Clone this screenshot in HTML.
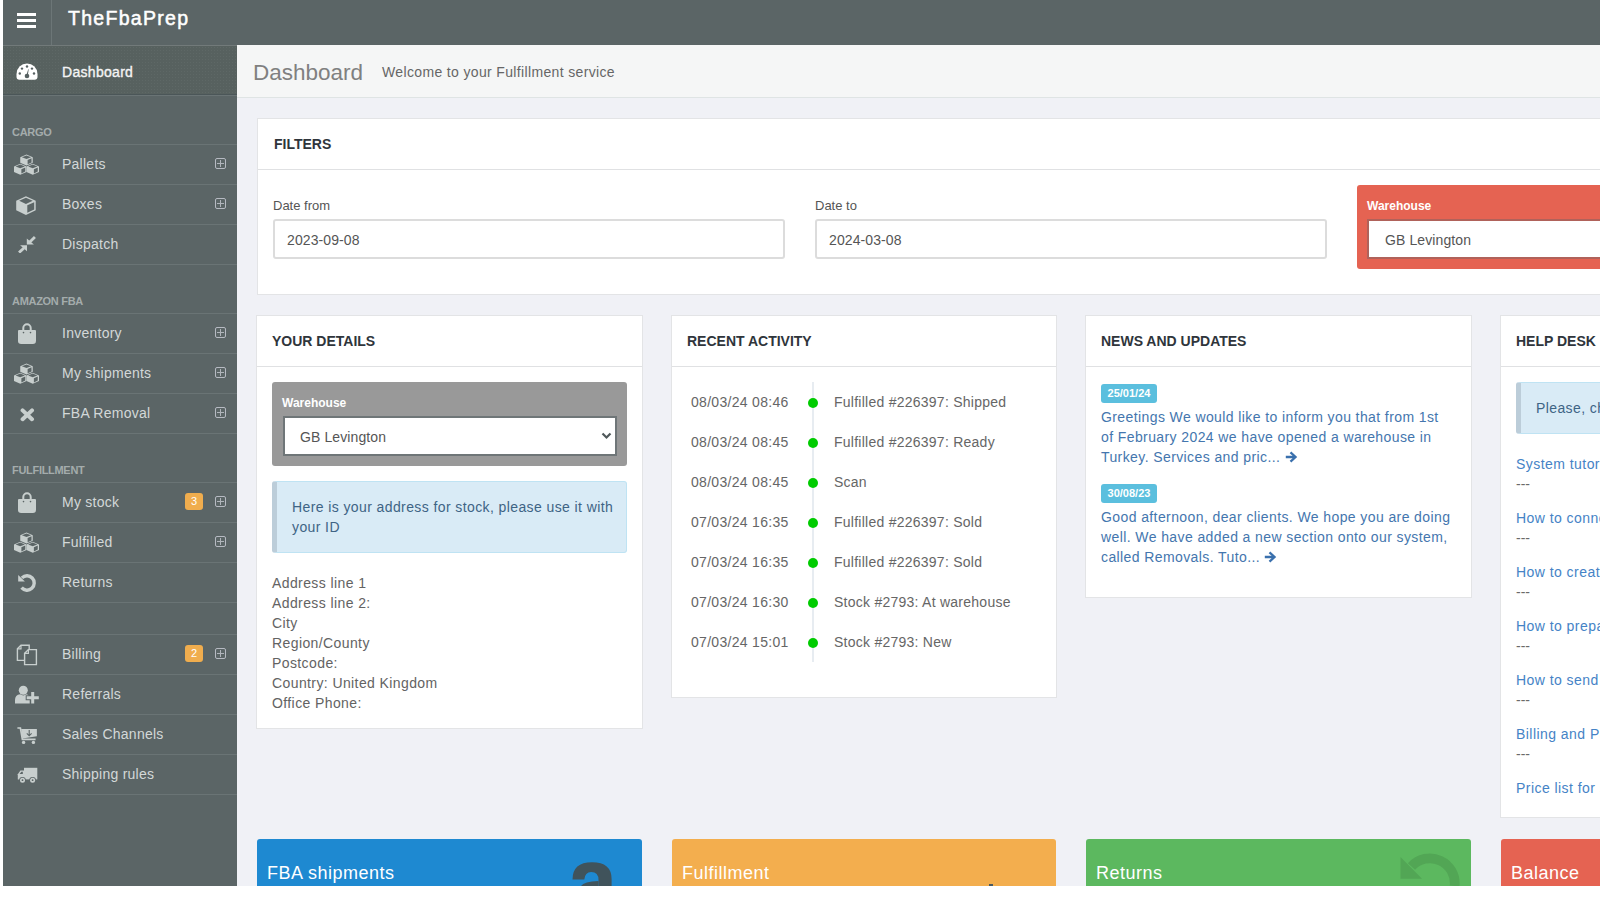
<!DOCTYPE html>
<html><head><meta charset="utf-8">
<style>
*{box-sizing:border-box;margin:0;padding:0}
html,body{width:1600px;height:900px;overflow:hidden;background:#fff;font-family:"Liberation Sans",sans-serif}
#page{position:absolute;left:0;top:0;width:1600px;height:886px;overflow:hidden;background:#fff}
#cbg{position:absolute;left:237px;top:45px;width:1363px;height:841px;background:#f0f1f6}
.abs{position:absolute}
/* header */
#hdr{position:absolute;left:3px;top:0;width:1597px;height:45px;background:#5b6566}
#burger{position:absolute;left:14px;top:13px;width:19px;height:15px}
#burger i{position:absolute;left:0;width:19px;height:3px;background:#fff}
#hdiv{position:absolute;left:48px;top:0;width:1px;height:45px;background:#6c7677}
#logo{position:absolute;left:65px;top:7px;font-size:19.5px;color:#fff;letter-spacing:1.3px;font-weight:normal;-webkit-text-stroke:0.5px #fff;line-height:22px}
/* sidebar */
#side{position:absolute;left:3px;top:45px;width:234px;height:841px;background:#5b6566}
.sact{position:absolute;left:0;top:0;width:234px;height:50px;background:#566061;border-bottom:1px solid #4f5a5b}
.si{position:absolute;left:0;width:234px;height:40px;border-bottom:1px solid #6a7475;color:#d3d8d8;font-size:14px}
.si .t{position:absolute;left:59px;top:12px;line-height:16px}
.si svg.ic{position:absolute}
.stxt{font-size:14px;color:#d3d8d8;line-height:16px;letter-spacing:0.25px}
.sh{position:absolute;left:9px;font-size:11px;font-weight:bold;color:#a4acac;line-height:12px;letter-spacing:-0.3px}
.plus{position:absolute;left:212px;top:13px;width:11px;height:11px;border:1px solid #b6bac2;border-radius:2px}
.plus:before{content:"";position:absolute;left:4px;top:1px;width:1px;height:7px;background:#b0b5bb}
.plus:after{content:"";position:absolute;left:1px;top:4px;width:7px;height:1px;background:#b0b5bb}
.badge{position:absolute;left:182px;top:12px;width:18px;height:17px;background:#f0ad4e;border-radius:3px;color:#fff;font-size:11px;text-align:center;line-height:17px}
/* page bar */
#pbar{position:absolute;left:237px;top:45px;width:1363px;height:53px;background:#f5f6f6;border-bottom:1px solid #dfe4e4}
#ptitle{position:absolute;left:16px;top:14px;font-size:22.5px;color:#808080;line-height:28px}
#psub{position:absolute;left:145px;top:18px;font-size:14px;color:#666;line-height:18px;letter-spacing:0.35px}
/* cards */
.card{position:absolute;background:#fff;border:1px solid #e3e4e6}
.card .ch{position:absolute;left:0;top:0;right:0;height:51px;border-bottom:1px solid #e0e1e3}
.card .ch span{position:absolute;left:15px;top:17px;font-size:14px;font-weight:bold;color:#2f353b;line-height:17px}
.lbl{position:absolute;font-size:13px;color:#555;line-height:16px}
.inp{position:absolute;height:40px;border:2px solid #dcdcdc;border-radius:3px;background:#fff;font-size:14px;color:#555;line-height:36px;padding-left:12px;padding-top:1px;letter-spacing:0.1px}
.tl{position:absolute;font-size:14px;color:#666;line-height:20px;letter-spacing:0.4px;white-space:nowrap}
.nlink{color:#4476ae}
.nb{position:absolute;width:56px;height:19px;background:#5bbfde;border-radius:3px;color:#fff;font-size:11px;font-weight:bold;text-align:center;line-height:19px}
.hlink{color:#4583c6;letter-spacing:0.45px}
.tile{position:absolute;top:839px;height:60px;border-radius:3px;color:#fff}
.tile span{position:absolute;left:10px;top:23px;font-size:18px;line-height:22px;letter-spacing:0.5px}
</style></head><body>
<div id="page">
  <div id="cbg"></div>
  <div id="hdr">
    <div id="burger"><i style="top:0"></i><i style="top:6px"></i><i style="top:12px"></i></div>
    <div id="hdiv"></div>
    <div id="logo">TheFbaPrep</div>
  </div>

  <div id="side"></div>
<div class="abs" style="left:3px;top:45px;width:234px;height:51px;background-color:#57615f;background-image:radial-gradient(rgba(255,255,255,0.045) 35%, transparent 45%);background-size:3px 3px;border-top:1px solid #727a7a;border-bottom:1px solid #6a7475;box-shadow:inset 0 -1px 0 #4b5658"></div>
<div class="abs" style="left:62px;top:64px;font-size:14px;color:#f4f4f4;line-height:16px;letter-spacing:0.3px;-webkit-text-stroke:0.35px #f4f4f4">Dashboard</div>
<svg class="abs" style="left:16px;top:63px" width="22" height="17" viewBox="0 0 22 17"><path d="M0.5,11 A10.5,10.5 0 0 1 21.5,11 L21.5,13.6 Q21.5,16.8 18.6,16.8 L3.4,16.8 Q0.5,16.8 0.5,13.6 Z" fill="#fff"/><circle cx="11" cy="3.5" r="1.2" fill="#566061"/><circle cx="6" cy="5.6" r="1.2" fill="#566061"/><circle cx="16" cy="5.6" r="1.2" fill="#566061"/><circle cx="3.8" cy="10.5" r="1.2" fill="#566061"/><circle cx="18" cy="10.5" r="1.2" fill="#566061"/><circle cx="11" cy="13" r="2.3" fill="#566061"/><polygon points="10.3,12.6 11.7,12.9 12.7,6.3 12.2,6.2" fill="#566061"/></svg>
<div class="abs" style="left:3px;top:96px;width:234px;height:49px;border-bottom:1px solid #6a7475"></div>
<div class="sh" style="top:126px;left:12px">CARGO</div>
<div class="abs" style="left:3px;top:265px;width:234px;height:49px;border-bottom:1px solid #6a7475"></div>
<div class="sh" style="top:295px;left:12px">AMAZON FBA</div>
<div class="abs" style="left:3px;top:434px;width:234px;height:49px;border-bottom:1px solid #6a7475"></div>
<div class="sh" style="top:464px;left:12px">FULFILLMENT</div>
<div class="abs" style="left:3px;top:603px;width:234px;height:32px;border-bottom:1px solid #6a7475"></div>
<div class="abs" style="left:3px;top:145px;width:234px;height:40px;border-bottom:1px solid #6a7475"></div>
<div class="abs stxt" style="left:62px;top:156px">Pallets</div>
<svg class="abs" style="left:14px;top:154px" width="25" height="21" viewBox="0 0 25 21"><polygon fill="#c8cfce" points="6.25,3.25 12.50,0.50 18.75,3.25 18.75,8.75 12.50,11.50 6.25,8.75"/><polygon fill="#5b6566" points="7.88,3.25 12.50,1.38 17.12,3.25 12.50,5.12"/><polygon fill="#5b6566" points="13.62,6.00 17.50,4.35 17.50,8.42 13.62,10.18"/><polygon fill="#c8cfce" points="0.00,12.45 6.25,9.70 12.50,12.45 12.50,17.95 6.25,20.70 0.00,17.95"/><polygon fill="#5b6566" points="1.62,12.45 6.25,10.58 10.88,12.45 6.25,14.32"/><polygon fill="#5b6566" points="7.38,15.20 11.25,13.55 11.25,17.62 7.38,19.38"/><polygon fill="#c8cfce" points="12.50,12.45 18.75,9.70 25.00,12.45 25.00,17.95 18.75,20.70 12.50,17.95"/><polygon fill="#5b6566" points="14.12,12.45 18.75,10.58 23.38,12.45 18.75,14.32"/><polygon fill="#5b6566" points="19.88,15.20 23.75,13.55 23.75,17.62 19.88,19.38"/></svg>
<div class="plus" style="left:215px;top:158px"></div>
<div class="abs" style="left:3px;top:185px;width:234px;height:40px;border-bottom:1px solid #6a7475"></div>
<div class="abs stxt" style="left:62px;top:196px">Boxes</div>
<svg class="abs" style="left:16px;top:196px" width="20" height="19" viewBox="0 0 20 19"><polygon fill="#c8cfce" points="0.2,4.75 9.95,0.2 19.7,4.75 19.7,14.25 9.95,18.9 0.2,14.25"/><polygon fill="#5b6566" points="3.2,4.75 9.95,1.7 16.7,4.75 9.95,7.9"/><polygon fill="#5b6566" points="11.3,9.3 18.2,6.3 18.2,13.4 11.3,16.8"/></svg>
<div class="plus" style="left:215px;top:198px"></div>
<div class="abs" style="left:3px;top:225px;width:234px;height:40px;border-bottom:1px solid #6a7475"></div>
<div class="abs stxt" style="left:62px;top:236px">Dispatch</div>
<svg class="abs" style="left:18px;top:236px" width="18" height="17" viewBox="0 0 18 17"><polygon fill="#c8cfce" points="8.8,2.4 8.8,8.6 15.9,8.6"/><line x1="11.8" y1="6" x2="16.9" y2="1.1" stroke="#c8cfce" stroke-width="2.8"/><polygon fill="#c8cfce" points="2.1,9.3 9,9.3 9,15.2"/><line x1="6" y1="12" x2="1" y2="16.6" stroke="#c8cfce" stroke-width="2.8"/></svg>
<div class="abs" style="left:3px;top:314px;width:234px;height:40px;border-bottom:1px solid #6a7475"></div>
<div class="abs stxt" style="left:62px;top:325px">Inventory</div>
<svg class="abs" style="left:18px;top:323px" width="18" height="21" viewBox="0 0 18 21"><path d="M5.3,8 V5 A3.7,3.7 0 0 1 12.7,5 V8" fill="none" stroke="#c8cfce" stroke-width="2"/><path d="M1,7 H17 Q18,7 18,8 V17.8 Q18,21 14.8,21 H3.2 Q0,21 0,17.8 V8 Q0,7 1,7 Z" fill="#c8cfce"/><circle cx="5.5" cy="9.6" r="0.8" fill="#5b6566"/><circle cx="12.5" cy="9.6" r="0.8" fill="#5b6566"/></svg>
<div class="plus" style="left:215px;top:327px"></div>
<div class="abs" style="left:3px;top:354px;width:234px;height:40px;border-bottom:1px solid #6a7475"></div>
<div class="abs stxt" style="left:62px;top:365px">My shipments</div>
<svg class="abs" style="left:14px;top:363px" width="25" height="21" viewBox="0 0 25 21"><polygon fill="#c8cfce" points="6.25,3.25 12.50,0.50 18.75,3.25 18.75,8.75 12.50,11.50 6.25,8.75"/><polygon fill="#5b6566" points="7.88,3.25 12.50,1.38 17.12,3.25 12.50,5.12"/><polygon fill="#5b6566" points="13.62,6.00 17.50,4.35 17.50,8.42 13.62,10.18"/><polygon fill="#c8cfce" points="0.00,12.45 6.25,9.70 12.50,12.45 12.50,17.95 6.25,20.70 0.00,17.95"/><polygon fill="#5b6566" points="1.62,12.45 6.25,10.58 10.88,12.45 6.25,14.32"/><polygon fill="#5b6566" points="7.38,15.20 11.25,13.55 11.25,17.62 7.38,19.38"/><polygon fill="#c8cfce" points="12.50,12.45 18.75,9.70 25.00,12.45 25.00,17.95 18.75,20.70 12.50,17.95"/><polygon fill="#5b6566" points="14.12,12.45 18.75,10.58 23.38,12.45 18.75,14.32"/><polygon fill="#5b6566" points="19.88,15.20 23.75,13.55 23.75,17.62 19.88,19.38"/></svg>
<div class="plus" style="left:215px;top:367px"></div>
<div class="abs" style="left:3px;top:394px;width:234px;height:40px;border-bottom:1px solid #6a7475"></div>
<div class="abs stxt" style="left:62px;top:405px">FBA Removal</div>
<svg class="abs" style="left:20px;top:408px" width="15" height="14" viewBox="0 0 15 14"><path d="M2.6,2.4 L12,11.2 M12,2.4 L2.6,11.2" stroke="#c8cfce" stroke-width="4" stroke-linecap="round"/></svg>
<div class="plus" style="left:215px;top:407px"></div>
<div class="abs" style="left:3px;top:483px;width:234px;height:40px;border-bottom:1px solid #6a7475"></div>
<div class="abs stxt" style="left:62px;top:494px">My stock</div>
<svg class="abs" style="left:18px;top:492px" width="18" height="21" viewBox="0 0 18 21"><path d="M5.3,8 V5 A3.7,3.7 0 0 1 12.7,5 V8" fill="none" stroke="#c8cfce" stroke-width="2"/><path d="M1,7 H17 Q18,7 18,8 V17.8 Q18,21 14.8,21 H3.2 Q0,21 0,17.8 V8 Q0,7 1,7 Z" fill="#c8cfce"/><circle cx="5.5" cy="9.6" r="0.8" fill="#5b6566"/><circle cx="12.5" cy="9.6" r="0.8" fill="#5b6566"/></svg>
<div class="plus" style="left:215px;top:496px"></div>
<div class="badge" style="left:185px;top:493px">3</div>
<div class="abs" style="left:3px;top:523px;width:234px;height:40px;border-bottom:1px solid #6a7475"></div>
<div class="abs stxt" style="left:62px;top:534px">Fulfilled</div>
<svg class="abs" style="left:14px;top:532px" width="25" height="21" viewBox="0 0 25 21"><polygon fill="#c8cfce" points="6.25,3.25 12.50,0.50 18.75,3.25 18.75,8.75 12.50,11.50 6.25,8.75"/><polygon fill="#5b6566" points="7.88,3.25 12.50,1.38 17.12,3.25 12.50,5.12"/><polygon fill="#5b6566" points="13.62,6.00 17.50,4.35 17.50,8.42 13.62,10.18"/><polygon fill="#c8cfce" points="0.00,12.45 6.25,9.70 12.50,12.45 12.50,17.95 6.25,20.70 0.00,17.95"/><polygon fill="#5b6566" points="1.62,12.45 6.25,10.58 10.88,12.45 6.25,14.32"/><polygon fill="#5b6566" points="7.38,15.20 11.25,13.55 11.25,17.62 7.38,19.38"/><polygon fill="#c8cfce" points="12.50,12.45 18.75,9.70 25.00,12.45 25.00,17.95 18.75,20.70 12.50,17.95"/><polygon fill="#5b6566" points="14.12,12.45 18.75,10.58 23.38,12.45 18.75,14.32"/><polygon fill="#5b6566" points="19.88,15.20 23.75,13.55 23.75,17.62 19.88,19.38"/></svg>
<div class="plus" style="left:215px;top:536px"></div>
<div class="abs" style="left:3px;top:563px;width:234px;height:40px;border-bottom:1px solid #6a7475"></div>
<div class="abs stxt" style="left:62px;top:574px">Returns</div>
<svg class="abs" style="left:18px;top:574px" width="19" height="19" viewBox="0 0 19 19"><path d="M3.91,3.91 A7.2,7.2 0 1 1 3.57,13.72" fill="none" stroke="#c8cfce" stroke-width="3.4"/><polygon fill="#c8cfce" points="0.2,1 0.2,7.4 6.9,7.4"/></svg>
<div class="abs" style="left:3px;top:635px;width:234px;height:40px;border-bottom:1px solid #6a7475"></div>
<div class="abs stxt" style="left:62px;top:646px">Billing</div>
<svg class="abs" style="left:16px;top:644px" width="22" height="22" viewBox="0 0 22 22"><path d="M5,1.2 H13.2 V16.4 H1.4 V4.8 Z" fill="none" stroke="#c8cfce" stroke-width="1.4"/><path d="M1.4,4.8 H5 V1.2" fill="none" stroke="#c8cfce" stroke-width="1.2"/><path d="M12.4,5.6 H20.4 V20.6 H8.6 V9.4 Z" fill="#5b6566" stroke="#c8cfce" stroke-width="1.4"/><path d="M8.6,9.4 H12.4 V5.6" fill="none" stroke="#c8cfce" stroke-width="1.2"/></svg>
<div class="plus" style="left:215px;top:648px"></div>
<div class="badge" style="left:185px;top:645px">2</div>
<div class="abs" style="left:3px;top:675px;width:234px;height:40px;border-bottom:1px solid #6a7475"></div>
<div class="abs stxt" style="left:62px;top:686px">Referrals</div>
<svg class="abs" style="left:15px;top:685px" width="25" height="20" viewBox="0 0 25 20"><circle cx="8.3" cy="5.2" r="4.5" fill="#c8cfce"/><path d="M0,18.4 V15 Q0,10 5.2,9.3 Q8.3,11.6 11.4,9.3 Q14.7,10 14.7,15 V18.4 Z" fill="#c8cfce"/><path d="M10.7,12.8 H24.3 M17.7,6 V19.4" stroke="#5b6566" stroke-width="5"/><path d="M11.7,12.8 H23.8 M17.7,7 V18.6" stroke="#c8cfce" stroke-width="3"/></svg>
<div class="abs" style="left:3px;top:715px;width:234px;height:40px;border-bottom:1px solid #6a7475"></div>
<div class="abs stxt" style="left:62px;top:726px">Sales Channels</div>
<svg class="abs" style="left:17px;top:727px" width="21" height="18" viewBox="0 0 21 18"><path d="M0.4,1 H3.4 L5.4,12.3 H18.6" fill="none" stroke="#c8cfce" stroke-width="1.7"/><polygon fill="#c8cfce" points="4.2,2 19.9,2 19.9,9.3 5.4,11.4"/><path d="M12.2,3 V8.6 M9.8,6.4 L12.2,8.8 L14.6,6.4" fill="none" stroke="#5b6566" stroke-width="1.1"/><circle cx="6.6" cy="15.4" r="1.7" fill="#c8cfce"/><circle cx="16.4" cy="15.4" r="1.7" fill="#c8cfce"/></svg>
<div class="abs" style="left:3px;top:755px;width:234px;height:40px;border-bottom:1px solid #6a7475"></div>
<div class="abs stxt" style="left:62px;top:766px">Shipping rules</div>
<svg class="abs" style="left:17px;top:767px" width="21" height="17" viewBox="0 0 21 17"><rect x="7" y="0.8" width="13.3" height="11.6" fill="#c8cfce"/><polygon fill="#c8cfce" points="0.8,7.2 3.4,3.6 7.5,3.6 7.5,12.4 0.8,12.4"/><polygon fill="#5b6566" points="2.6,6.9 4.4,4.7 5.8,4.7 5.8,6.9"/><circle cx="5.5" cy="13.2" r="3.3" fill="#5b6566"/><circle cx="5.5" cy="13.2" r="2.5" fill="#c8cfce"/><circle cx="5.5" cy="13.2" r="0.9" fill="#5b6566"/><circle cx="15.6" cy="13.2" r="3.3" fill="#5b6566"/><circle cx="15.6" cy="13.2" r="2.5" fill="#c8cfce"/><circle cx="15.6" cy="13.2" r="0.9" fill="#5b6566"/></svg>

  <div id="pbar">
    <div id="ptitle">Dashboard</div>
    <div id="psub">Welcome to your Fulfillment service</div>
  </div>

  <!-- filters -->
  <div class="card" style="left:257px;top:118px;width:1629px;height:177px">
    <div class="ch"><span style="left:16px">FILTERS</span></div>
  </div>
  <div class="lbl" style="left:273px;top:198px">Date from</div>
  <div class="inp" style="left:273px;top:219px;width:512px">2023-09-08</div>
  <div class="lbl" style="left:815px;top:198px">Date to</div>
  <div class="inp" style="left:815px;top:219px;width:512px">2024-03-08</div>
  <div class="abs" style="left:1357px;top:185px;width:512px;height:84px;background:#e56352;border-radius:3px"></div>
  <div class="lbl" style="left:1367px;top:198px;color:#fff;font-weight:bold;font-size:12px">Warehouse</div>
  <div class="inp" style="left:1367px;top:219px;width:493px;height:40px;border-color:#b0625a;border-radius:0;padding-left:16px;padding-top:1px">GB Levington</div>

  <!-- your details -->
  <div class="card" style="left:256px;top:315px;width:387px;height:414px">
    <div class="ch"><span>YOUR DETAILS</span></div>
  </div>
  <div class="abs" style="left:272px;top:382px;width:355px;height:84px;background:#999;border-radius:3px"></div>
  <div class="lbl" style="left:282px;top:395px;color:#fff;font-weight:bold;font-size:12px">Warehouse</div>
  <div class="inp" style="left:283px;top:416px;width:334px;height:40px;border-color:#6f7678;border-radius:0;padding-left:15px;padding-top:1px">GB Levington</div>
  <svg class="abs" style="left:601px;top:432px" width="11" height="8" viewBox="0 0 11 8"><path d="M1.5,1.5 L5.5,5.5 L9.5,1.5" fill="none" stroke="#4f585a" stroke-width="2.2"/></svg>
  <div class="abs" style="left:272px;top:481px;width:355px;height:72px;background:#d9ebf6;border:1px solid #bfe3f3;border-left:5px solid #bccdd9;border-radius:3px"></div>
  <div class="tl" style="left:292px;top:497px;width:330px;color:#3e6485">Here is your address for stock, please use it with<br>your ID</div>
  <div class="tl" style="left:272px;top:573px;color:#636363">Address line 1<br>Address line 2:<br>City<br>Region/County<br>Postcode:<br>Country: United Kingdom<br>Office Phone:</div>

  <!-- recent activity -->
  <div class="card" style="left:671px;top:315px;width:386px;height:383px">
    <div class="ch"><span>RECENT ACTIVITY</span></div>
  </div>
  <div class="abs" style="left:812px;top:382px;width:2px;height:280px;background:#e7ecf1"></div>
  <div class="tl" style="left:691px;top:392px;letter-spacing:0.3px">08/03/24 08:46</div>
  <div class="abs" style="left:808px;top:398px;width:10px;height:10px;border-radius:50%;background:#0c0"></div>
  <div class="tl" style="left:834px;top:392px;letter-spacing:0.25px">Fulfilled #226397: Shipped</div>
  <div class="tl" style="left:691px;top:432px;letter-spacing:0.3px">08/03/24 08:45</div>
  <div class="abs" style="left:808px;top:438px;width:10px;height:10px;border-radius:50%;background:#0c0"></div>
  <div class="tl" style="left:834px;top:432px;letter-spacing:0.25px">Fulfilled #226397: Ready</div>
  <div class="tl" style="left:691px;top:472px;letter-spacing:0.3px">08/03/24 08:45</div>
  <div class="abs" style="left:808px;top:478px;width:10px;height:10px;border-radius:50%;background:#0c0"></div>
  <div class="tl" style="left:834px;top:472px;letter-spacing:0.25px">Scan</div>
  <div class="tl" style="left:691px;top:512px;letter-spacing:0.3px">07/03/24 16:35</div>
  <div class="abs" style="left:808px;top:518px;width:10px;height:10px;border-radius:50%;background:#0c0"></div>
  <div class="tl" style="left:834px;top:512px;letter-spacing:0.25px">Fulfilled #226397: Sold</div>
  <div class="tl" style="left:691px;top:552px;letter-spacing:0.3px">07/03/24 16:35</div>
  <div class="abs" style="left:808px;top:558px;width:10px;height:10px;border-radius:50%;background:#0c0"></div>
  <div class="tl" style="left:834px;top:552px;letter-spacing:0.25px">Fulfilled #226397: Sold</div>
  <div class="tl" style="left:691px;top:592px;letter-spacing:0.3px">07/03/24 16:30</div>
  <div class="abs" style="left:808px;top:598px;width:10px;height:10px;border-radius:50%;background:#0c0"></div>
  <div class="tl" style="left:834px;top:592px;letter-spacing:0.25px">Stock #2793: At warehouse</div>
  <div class="tl" style="left:691px;top:632px;letter-spacing:0.3px">07/03/24 15:01</div>
  <div class="abs" style="left:808px;top:638px;width:10px;height:10px;border-radius:50%;background:#0c0"></div>
  <div class="tl" style="left:834px;top:632px;letter-spacing:0.25px">Stock #2793: New</div>
  <!-- news -->
  <div class="card" style="left:1085px;top:315px;width:387px;height:283px">
    <div class="ch"><span>NEWS AND UPDATES</span></div>
  </div>
  <div class="nb" style="left:1101px;top:384px">25/01/24</div>
  <div class="tl nlink" style="left:1101px;top:407px;width:360px">Greetings We would like to inform you that from 1st<br>of February 2024 we have opened a warehouse in<br>Turkey. Services and pric... <svg width="13" height="12" viewBox="0 0 13 12" style="position:relative;top:1px"><path d="M6.3,0.6 L12.2,6 L6.3,11.4 L4.7,9.8 L7.6,7.2 H0.8 V4.8 H7.6 L4.7,2.2 Z" fill="#3a70ad"/></svg></div>
  <div class="nb" style="left:1101px;top:484px">30/08/23</div>
  <div class="tl nlink" style="left:1101px;top:507px;width:360px">Good afternoon, dear clients. We hope you are doing<br>well. We have added a new section onto our system,<br>called Removals. Tuto... <svg width="13" height="12" viewBox="0 0 13 12" style="position:relative;top:1px"><path d="M6.3,0.6 L12.2,6 L6.3,11.4 L4.7,9.8 L7.6,7.2 H0.8 V4.8 H7.6 L4.7,2.2 Z" fill="#3a70ad"/></svg></div>

  <!-- help desk -->
  <div class="card" style="left:1500px;top:315px;width:387px;height:503px">
    <div class="ch"><span>HELP DESK</span></div>
  </div>
  <div class="abs" style="left:1516px;top:382px;width:355px;height:52px;background:#d9ebf6;border:1px solid #bfe3f3;border-left:5px solid #bccdd9;border-radius:3px"></div>
  <div class="tl" style="left:1536px;top:398px;color:#3e6485;white-space:nowrap">Please, check our tutorials</div>
  <div class="tl hlink" style="left:1516px;top:454px;white-space:nowrap">System tutorials</div>
  <div class="tl" style="left:1516px;top:474px;color:#6a6a6a;letter-spacing:0">---</div>
  <div class="tl hlink" style="left:1516px;top:508px;white-space:nowrap">How to connect your store</div>
  <div class="tl" style="left:1516px;top:528px;color:#6a6a6a;letter-spacing:0">---</div>
  <div class="tl hlink" style="left:1516px;top:562px;white-space:nowrap">How to create shipment</div>
  <div class="tl" style="left:1516px;top:582px;color:#6a6a6a;letter-spacing:0">---</div>
  <div class="tl hlink" style="left:1516px;top:616px;white-space:nowrap">How to prepare products</div>
  <div class="tl" style="left:1516px;top:636px;color:#6a6a6a;letter-spacing:0">---</div>
  <div class="tl hlink" style="left:1516px;top:670px;white-space:nowrap">How to send stock</div>
  <div class="tl" style="left:1516px;top:690px;color:#6a6a6a;letter-spacing:0">---</div>
  <div class="tl hlink" style="left:1516px;top:724px;white-space:nowrap">Billing and Payments</div>
  <div class="tl" style="left:1516px;top:744px;color:#6a6a6a;letter-spacing:0">---</div>
  <div class="tl hlink" style="left:1516px;top:778px;white-space:nowrap">Price list for services</div>
  <!-- tiles -->
  <div class="tile" style="left:257px;width:385px;background:#1e89d1"><span>FBA shipments</span></div>
  <div class="tile" style="left:672px;width:384px;background:#f3ae4e"><span>Fulfillment</span></div>
  <div class="tile" style="left:1086px;width:385px;background:#5cb85f"><span>Returns</span></div>
  <div class="tile" style="left:1501px;width:385px;background:#e56352"><span>Balance</span></div>
  <svg class="abs" style="left:560px;top:850px" width="70" height="36" viewBox="560 850 70 36"><path d="M572.5,879.5 Q572.5,862.2 592,862.2 Q611.6,862.2 611.6,879 V886 H598.5 V880 Q598.5,872 591.2,872 Q585,872 584.3,879.5 Z" fill="#40535b"/><path d="M581,886 Q584,881.5 598.5,881 V886 Z" fill="#40535b"/></svg>
  <div class="abs" style="left:989px;top:884px;width:4px;height:2px;background:#4b5a60"></div>
  <svg class="abs" style="left:1395px;top:850px" width="70" height="36" viewBox="1395 850 70 36"><path d="M1411.5,866.5 A24.85,24.85 0 0 1 1454.6,886" fill="none" stroke="#52a655" stroke-width="9.7"/><polygon points="1400.5,857 1400.5,878.7 1422,878.7" fill="#52a655"/></svg>


</div>
<div class="abs" style="left:0;top:0;width:3px;height:900px;background:#fff"></div>
</body></html>
